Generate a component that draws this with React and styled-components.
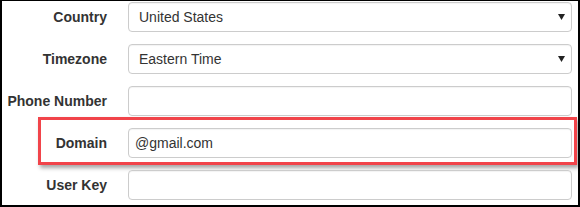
import React from "react";
import styled, { createGlobalStyle } from "styled-components";

const Global = createGlobalStyle`
  html, body { margin: 0; padding: 0; background: #fff; }
  * { box-sizing: border-box; }
  body { font-family: "Liberation Sans", Arial, sans-serif; }
`;

const Frame = styled.div`
  width: 580px;
  height: 207px;
  border-style: solid;
  border-color: #000;
  border-width: 1px 2px 2px 2px;
  padding: 1px 6px 0 0;
  display: flex;
  flex-direction: column;
  gap: 12px;
  overflow: hidden;
  background: #fff;
`;

const Row = styled.div`
  position: relative;
  display: grid;
  grid-template-columns: 105px 1fr;
  column-gap: 21px;
  align-items: center;
  height: 30px;
`;

const Label = styled.label`
  text-align: right;
  font-weight: bold;
  font-size: 14px;
  color: #333;
  white-space: nowrap;
  position: relative;
  z-index: 1;
`;

const fieldBase = `
  width: 100%;
  height: 30px;
  border: 1px solid #ccc;
  border-radius: 4px;
  background: #fff;
  font-family: "Liberation Sans", Arial, sans-serif;
  font-size: 14px;
  color: #333;
  box-shadow: inset 0 1px 1px rgba(0,0,0,0.05);
  outline: none;
  margin: 0;
`;

const Input = styled.input`
  ${fieldBase}
  padding: 0 6px;
`;

const SelectWrap = styled.div`
  position: relative;
  width: 100%;
`;

const Select = styled.select`
  ${fieldBase}
  appearance: none;
  -webkit-appearance: none;
  padding: 0 10px;
`;

const Arrow = styled.svg`
  position: absolute;
  right: 7px;
  top: 12px;
  width: 7px;
  height: 6px;
  pointer-events: none;
`;

const Highlight = styled.div`
  position: absolute;
  left: 36px;
  top: -11px;
  right: -5px;
  bottom: -7px;
  border: 3px solid #f1444a;
  box-shadow: 2px 3px 4px rgba(0, 0, 0, 0.35);
  pointer-events: none;
`;

const SelectField = ({ value, options }) => (
  <SelectWrap>
    <Select defaultValue={value}>
      {options.map((o) => (
        <option key={o}>{o}</option>
      ))}
    </Select>
    <Arrow viewBox="0 0 7 6">
      <path d="M0 0 H7 L3.5 6 Z" fill="#222" />
    </Arrow>
  </SelectWrap>
);

export default function App() {
  return (
    <>
      <Global />
      <Frame>
        <Row>
          <Label>Country</Label>
          <SelectField value="United States" options={["United States", "Canada"]} />
        </Row>
        <Row>
          <Label>Timezone</Label>
          <SelectField value="Eastern Time" options={["Eastern Time", "Central Time"]} />
        </Row>
        <Row>
          <Label>Phone Number</Label>
          <Input type="text" defaultValue="" />
        </Row>
        <Row>
          <Highlight />
          <Label>Domain</Label>
          <Input type="text" defaultValue="@gmail.com" />
        </Row>
        <Row>
          <Label>User Key</Label>
          <Input type="text" defaultValue="" />
        </Row>
      </Frame>
    </>
  );
}
